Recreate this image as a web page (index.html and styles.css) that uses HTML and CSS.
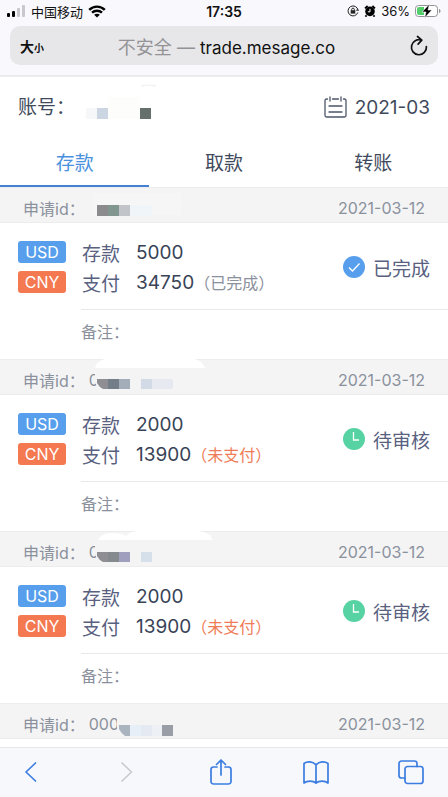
FILE: index.html
```html
<!DOCTYPE html>
<html lang="zh-CN">
<head>
<meta charset="utf-8">
<meta name="viewport" content="width=device-width, initial-scale=1">
<title>交易记录</title>
<link rel="stylesheet" href="styles.css">
</head>
<body>
<header class="browser">
  <div class="status">
    <div class="status-side">
      <svg width="20" height="12" viewBox="0 0 20 12" aria-hidden="true"><rect x="1" y="8" width="3" height="4" rx="1"/><rect x="6" y="6" width="3" height="6" rx="1"/><rect x="11" y="3" width="3" height="9" rx="1" fill="#c9c9cd"/><rect x="16" y="0" width="3" height="12" rx="1" fill="#c9c9cd"/></svg>
      <span>中国移动</span>
      <svg width="18" height="13" viewBox="0 0 18 13" aria-hidden="true" fill="none" stroke="#000" stroke-width="2.4"><path d="M1.2 4.8C5.6.5 12.4.5 16.8 4.8M4 7.7c2.8-2.6 7.2-2.6 10 0"/><path d="M9 12.6 6.1 9.8c1.6-1.5 4.2-1.5 5.8 0z" fill="#000" stroke="none"/></svg>
    </div>
    <time class="clock">17:35</time>
    <div class="status-side status-right">
      <svg width="12" height="12" viewBox="0 0 12 12" aria-hidden="true" fill="none" stroke="#222"><path d="M10.8 7.5A5 5 0 1 1 11 5.2M9.2 5.2h2.6M4.7 5.6V4.4a1.3 1.3 0 0 1 2.6 0v1.2"/><rect x="3.7" y="5.2" width="4.6" height="3.4" fill="#222" stroke="none"/></svg>
      <svg width="12" height="12" viewBox="0 0 12 12" aria-hidden="true"><circle cx="6" cy="6.4" r="4.8"/><path d="M1 3.4 3.6 1M11 3.4 8.4 1M2.6 10.3l-1.2 1.3M9.4 10.3l1.2 1.3" stroke="#000" stroke-width="1.8"/><path d="M6 3.8v3H3.8" fill="none" stroke="#fff"/></svg>
      <span>36%</span>
      <svg width="27" height="14" viewBox="0 0 27 14" aria-hidden="true"><rect x=".5" y="1.5" width="22" height="11" rx="3" fill="#fff" stroke="#929297"/><path d="M4 3h5v8H4a2 2 0 0 1-2-2V5a2 2 0 0 1 2-2z" fill="#54cd6b"/><path d="M24 5c2 .6 2 3.400 0 4z" fill="#929297"/><path d="M14.500 0 7 8h4l-1.500 6L17 6h-4z" stroke="#fff" stroke-width=".6"/></svg>
    </div>
  </div>
  <div class="address">
    <button class="text-size" type="button">大<small>小</small></button>
    <button class="url" type="button"><span>不安全 — </span>trade.mesage.co</button>
    <button class="reload" type="button" aria-label="刷新"><svg width="20" height="22" viewBox="0 0 20 22" fill="none" stroke="#111" stroke-width="1.700" stroke-linecap="round" stroke-linejoin="round"><path d="M17.400 11.500A7.500 7.500 0 1 1 12.500 5.200M8.500 1.500l4.300 3.700-3.700 4"/></svg></button>
  </div>
</header>

<main class="page">
  <div class="account">
    <div class="account-name">账号：</div>
    <svg class="mask" width="100" height="44" viewBox="0 0 100 44" aria-hidden="true"><path d="M60 9q7-2 15 0" fill="none" stroke="#eee"/><path fill="#f5f7f8" d="M5 31h11v11H5z"/><path fill="#ccd6e3" d="M16 31h11v11H16z"/><path fill="#fdfdfb" d="M27 20h32v22H27z"/><path fill="#65706d" d="M59 31h11v11H59z"/></svg>
    <button class="month" type="button">
      <svg width="23" height="23" viewBox="0 0 23 23" fill="none" stroke="#4b5668" stroke-width="1.300" stroke-linecap="round"><path d="M3.500 3H2.500A1.500 1.500 0 0 0 1 4.500v15A1.500 1.500 0 0 0 2.500 21h18a1.500 1.500 0 0 0 1.500-1.500v-15A1.500 1.500 0 0 0 20.500 3h-1M8.500 3h6M6 1v4M17 1v4M5 10h13M5 16h13"/></svg>
      2021-03
    </button>
  </div>
  <nav class="tabs">
    <button class="tab active" type="button">存款</button>
    <button class="tab" type="button">取款</button>
    <button class="tab" type="button">转账</button>
  </nav>

  <section class="record">
    <div class="record-head">
      <span class="label">申请id：</span>
      <svg class="mask" width="140" height="52" viewBox="0 0 140 52" aria-hidden="true"><path fill="#f6f6f7" d="M8 14h88v22H8z"/><path fill="#8b8b8d" d="M12 26h11v11H12z"/><path fill="#80968f" d="M23 26h11v11H23z"/><path fill="#c1c5ca" d="M34 26h11v11H34z"/><path fill="#f0f5fa" d="M45 26h22v11H45z"/></svg>
      <time>2021-03-12</time>
    </div>
    <div class="record-body">
      <div class="summary">
        <div class="lines">
          <div class="line"><span class="tag usd">USD</span><span class="kind">存款</span><span class="amount">5000</span></div>
          <div class="line"><span class="tag cny">CNY</span><span class="kind">支付</span><span class="amount">34750</span><span class="paid">（已完成）</span></div>
        </div>
        <div class="state"><svg width="22" height="22" viewBox="0 0 22 22" aria-hidden="true"><circle cx="11" cy="11" r="11" fill="#579fec"/><path d="m6 11.500 3.500 3.500 7-7.500" fill="none" stroke="#fff" stroke-width="1.300"/></svg>已完成</div>
      </div>
      <div class="note">备注：</div>
    </div>
  </section>

  <section class="record">
    <div class="record-head">
      <span class="label">申请id：</span><span class="id">0</span>
      <svg class="mask" width="140" height="52" viewBox="0 0 140 52" aria-hidden="true"><path fill="#fff" d="M10 17c2-9 12-10 20-10h70c10 0 17 2 20 10z"/><path fill="#f4f4f5" d="M10 18h15v20H15q-5-4-5-8z"/><path fill="#8f8f93" d="M12 28h11v10h-5q-4-2-6-6z"/><path fill="#737e88" d="M23 28h11v10H23z"/><path fill="#a3adb9" d="M34 28h11v10H34z"/><path fill="#d1dae5" d="M56 28h11v10H56z"/><path fill="#e6eaf0" d="M67 28h21v10H67z"/></svg>
      <time>2021-03-12</time>
    </div>
    <div class="record-body">
      <div class="summary">
        <div class="lines">
          <div class="line"><span class="tag usd">USD</span><span class="kind">存款</span><span class="amount">2000</span></div>
          <div class="line"><span class="tag cny">CNY</span><span class="kind">支付</span><span class="amount">13900</span><span class="unpaid">（未支付）</span></div>
        </div>
        <div class="state"><svg width="22" height="22" viewBox="0 0 22 22" aria-hidden="true"><circle cx="11" cy="11" r="11" fill="#57d2a2"/><path d="M10.500 4v8H16" fill="none" stroke="#fff" stroke-width="1.300"/></svg>待审核</div>
      </div>
      <div class="note">备注：</div>
    </div>
  </section>

  <section class="record">
    <div class="record-head">
      <span class="label">申请id：</span><span class="id">0</span>
      <svg class="mask" width="140" height="52" viewBox="0 0 140 52" aria-hidden="true"><path fill="#fff" d="M13 17q3-7 14-7 10 0 14 3 4-5 14-5h58q14 2 14 9z"/><path fill="#f4f4f5" d="M10 18h15v20H15q-5-4-5-8z"/><path fill="#8f8f93" d="M12 29h11v10h-5q-4-2-6-6z"/><path fill="#858a8e" d="M23 29h11v10H23z"/><path fill="#a19fbe" d="M34 29h11v10H34z"/><path fill="#d5e0ea" d="M56 29h11v10H56z"/></svg>
      <time>2021-03-12</time>
    </div>
    <div class="record-body">
      <div class="summary">
        <div class="lines">
          <div class="line"><span class="tag usd">USD</span><span class="kind">存款</span><span class="amount">2000</span></div>
          <div class="line"><span class="tag cny">CNY</span><span class="kind">支付</span><span class="amount">13900</span><span class="unpaid">（未支付）</span></div>
        </div>
        <div class="state"><svg width="22" height="22" viewBox="0 0 22 22" aria-hidden="true"><circle cx="11" cy="11" r="11" fill="#57d2a2"/><path d="M10.500 4v8H16" fill="none" stroke="#fff" stroke-width="1.300"/></svg>待审核</div>
      </div>
      <div class="note">备注：</div>
    </div>
  </section>

  <section class="record">
    <div class="record-head">
      <span class="label">申请id：</span><span class="id">000</span>
      <svg class="mask" width="140" height="52" viewBox="0 0 140 52" aria-hidden="true"><path fill="#f4f4f5" d="M32 18h9v18h-9z"/><path fill="#a9b4bf" d="M34 30h11v11h-5q-4-3-6-7z"/><path fill="#e6eff8" d="M45 30h11v11H45z"/><path fill="#e4e9f2" d="M56 30h11v11H56z"/><path fill="#edf0f4" d="M67 30h10v11H67z"/><path fill="#989da6" d="M77 30h11v11H77z"/></svg>
      <time>2021-03-12</time>
    </div>
  </section>
</main>

<footer class="toolbar">
  <button type="button" aria-label="后退"><svg width="28" height="28" viewBox="0 0 28 28"><path d="M18.500 5 9 14l9.500 9"/></svg></button>
  <button type="button" aria-label="前进" disabled><svg width="28" height="28" viewBox="0 0 28 28"><path d="m10 5 9.500 9-9.500 9"/></svg></button>
  <button type="button" aria-label="分享"><svg width="28" height="28" viewBox="0 0 28 28"><path d="M10 9H6.500A2.500 2.500 0 0 0 4 11.500v12A2.500 2.500 0 0 0 6.500 26h15a2.500 2.500 0 0 0 2.500-2.500v-12A2.500 2.500 0 0 0 21.500 9H18M14 17V2M9.500 6.500 14 2l4.500 4.500"/></svg></button>
  <button type="button" aria-label="书签"><svg width="28" height="28" viewBox="0 0 28 28"><path d="M14 7C11 3.200 5 3.200 2 5.500V25c3-2.500 9-2.500 12 0 3-2.500 9-2.500 12 0V5.500C23 3.200 17 3.200 14 7zv18"/></svg></button>
  <button type="button" aria-label="标签页"><svg width="28" height="28" viewBox="0 0 28 28"><rect x="8" y="8.500" width="18" height="17" rx="2.500"/><path d="M8 20H4.500A2.500 2.500 0 0 1 2 17.500v-12A2.500 2.500 0 0 1 4.500 3h13A2.500 2.500 0 0 1 20 5.500v3"/></svg></button>
</footer>
</body>
</html>
```

FILE: styles.css
```css
* { box-sizing: border-box; }

body {
  margin: 0;
  min-height: 100vh;
  display: flex;
  flex-direction: column;
  background: #fff;
  color: #3f4a5c;
  font-family: Inter, "Noto Sans CJK SC", sans-serif;
  font-size: 19px;
}

button {
  margin: 0;
  padding: 0;
  border: 0;
  background: none;
  color: inherit;
  font: inherit;
}

svg { display: block; flex: none; }

.browser {
  padding: 0 10px 10px;
  background: #f9f9fd;
  border-bottom: 2px solid #ebebef;
  color: #111;
}

.status {
  display: flex;
  align-items: center;
  height: 22px;
  margin-bottom: 4px;
  padding-right: 4px;
  font-size: 13px;
}

.status-side {
  flex: 1;
  display: flex;
  align-items: center;
  gap: 5px;
  margin-left: -4px;
}

.status-right {
  justify-content: flex-end;
  margin: 0 -8px 0 0;
}

.clock { font-size: 14px; font-weight: 600; }

.address {
  display: flex;
  align-items: center;
  height: 39px;
  padding: 0 9px 0 10px;
  border-radius: 10px;
  background: #e7e7e9;
}

.text-size { width: 24px; text-align: left; font-size: 14px; font-weight: 700; white-space: nowrap; }
.text-size small { font-size: 10px; }
.url { flex: 1; font-size: 17px; white-space: nowrap; }
.url span { font-size: 18px; color: #939397; }
.reload { width: 20px; }

.account {
  position: relative;
  display: flex;
  justify-content: space-between;
  align-items: center;
  height: 60px;
  padding: 0 18px;
}

.account-name { padding-bottom: 4px; }
.account .mask { position: absolute; left: 81px; top: 0; }

.month { display: flex; align-items: center; gap: 8px; }

.tabs { display: flex; }

.tab {
  flex: 1;
  height: 50px;
  border-bottom: 2px solid transparent;
}

.tab.active { color: #4a90dd; border-color: #4480d4; }

.record-head {
  position: relative;
  display: flex;
  align-items: center;
  height: 36px;
  padding: 5px 23px 0;
  border-top: 1px solid #ededee;
  border-bottom: 1px solid #ededee;
  background: #f4f4f5;
  color: #8b919c;
  font-size: 16px;
}

.record-head .mask { position: absolute; left: 85px; top: -9px; }
.record-head time { margin-left: auto; }
.id { margin-left: 4px; }

.record-body { height: 136px; padding: 14px 0 0 18px; }

.summary {
  display: flex;
  justify-content: space-between;
  align-items: center;
  padding: 0 18px 12px 0;
}

.line { display: flex; align-items: center; height: 30px; }

.tag {
  width: 48px;
  height: 22px;
  margin-right: 16px;
  border-radius: 3px;
  color: #fff;
  font-size: 16px;
  line-height: 22px;
  text-align: center;
}

.usd { background: #579fec; }
.cny { background: #f47850; }
.kind { margin-right: 16px; color: #59617f; }
.amount { color: #384357; }
.paid, .unpaid { font-size: 16px; color: #8b919c; }
.unpaid { color: #ef7c58; }

.state { display: flex; align-items: center; gap: 8px; color: #59617f; }

.note {
  margin-left: 63px;
  border-top: 1px solid #e9e9eb;
  color: #8b919c;
  font-size: 16px;
  line-height: 44px;
}

.toolbar {
  display: flex;
  justify-content: space-between;
  align-items: center;
  height: 50px;
  margin-top: auto;
  padding: 0 23px 2px 17px;
  border-top: 1px solid #e6e6e8;
  background: #f7f8fb;
}

.toolbar svg { fill: none; stroke: #3b7de0; stroke-width: 1.700; stroke-linejoin: round; stroke-linecap: round; }
.toolbar button:disabled svg { stroke: #c9cacf; }
```
